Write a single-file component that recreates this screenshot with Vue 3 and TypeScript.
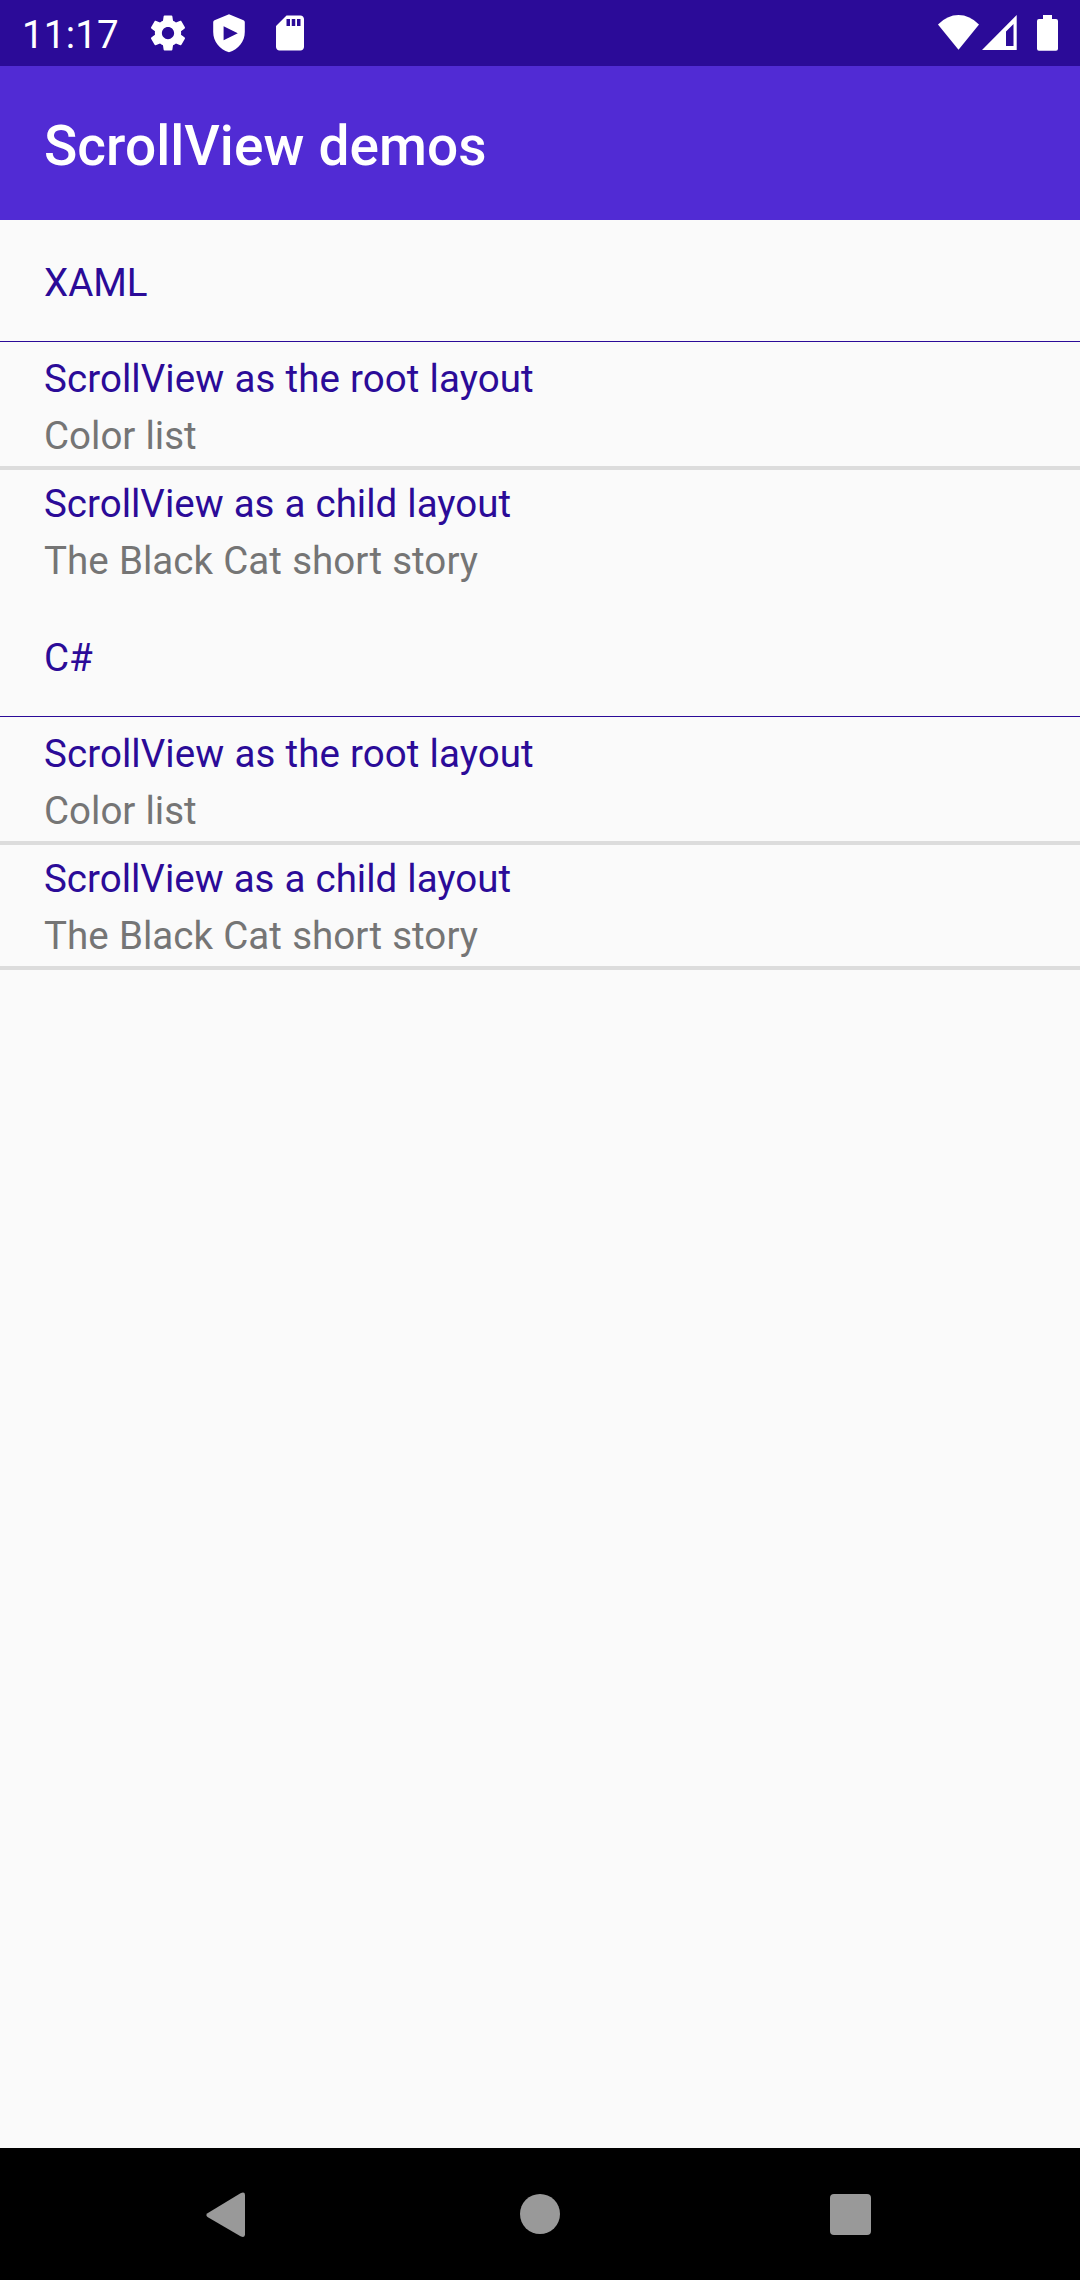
<script setup lang="ts">
interface Item {
  title: string
  titleTracking: number
  detail: string
  detailTracking: number
}
interface Section {
  name: string
  items: Item[]
}

const demos: Item[] = [
  {
    title: 'ScrollView as the root layout',
    titleTracking: 0.07,
    detail: 'Color list',
    detailTracking: 0,
  },
  {
    title: 'ScrollView as a child layout',
    titleTracking: 0,
    detail: 'The Black Cat short story',
    detailTracking: 0.06,
  },
]
const sections: Section[] = [
  { name: 'XAML', items: demos },
  { name: 'C#', items: demos },
]
</script>

<template>
  <div class="screen">
    <header class="status">
      <span class="time">11:17</span>
      <div class="notifications">
        <svg width="42" height="42" viewBox="0 0 24 24">
          <path d="M19.43 12.98c.04-.32.07-.64.07-.98s-.03-.66-.07-.98l2.11-1.65c.19-.15.24-.42.12-.64l-2-3.46c-.12-.22-.39-.3-.61-.22l-2.49 1c-.52-.4-1.08-.73-1.69-.98l-.38-2.65C14.46 2.18 14.25 2 14 2h-4c-.25 0-.46.18-.49.42l-.38 2.65c-.61.25-1.17.59-1.69.98l-2.49-1c-.23-.09-.49 0-.61.22l-2 3.46c-.13.22-.07.49.12.64l2.11 1.65c-.04.32-.07.65-.07.98s.03.66.07.98l-2.11 1.65c-.19.15-.24.42-.12.64l2 3.46c.12.22.39.3.61.22l2.49-1c.52.4 1.08.73 1.69.98l.38 2.65c.03.24.24.42.49.42h4c.25 0 .46-.18.49-.42l.38-2.65c.61-.25 1.17-.59 1.69-.98l2.49 1c.23.09.49 0 .61-.22l2-3.46c.12-.22.07-.49-.12-.64l-2.11-1.65zM12 15.5c-1.93 0-3.5-1.57-3.5-3.5s1.57-3.500 3.500-3.500 3.500 1.570 3.500 3.500-1.570 3.500-3.500 3.500z" />
        </svg>
        <svg width="42" height="42" viewBox="0 0 42 42">
          <path fill-rule="evenodd" d="M21 2.300 35.500 8.200Q36.800 8.800 36.800 10.200V20C36.800 29.500 30.500 37.300 21 40.300C11.500 37.300 5.200 29.500 5.200 20V10.200Q5.200 8.800 6.500 8.200ZM15.600 14.300V28.300L29.800 21.300Z" />
        </svg>
        <svg width="42" height="42" viewBox="0 0 24 24">
          <path d="M18 2h-8L4.020 8 4 20c0 1.100.9 2 2 2h12c1.100 0 2-.9 2-2V4c0-1.100-.9-2-2-2zm-6 6h-2V4h2v4zm3 0h-2V4h2v4zm3 0h-2V4h2v4z" />
        </svg>
      </div>
      <div class="system">
        <svg class="wifi" width="41" height="36" viewBox="0 0 41 36">
          <path d="M20.500 34.700 0 9.500Q9.200 0 20.500 0T41 9.500Z" />
        </svg>
        <svg class="signal" width="35" height="36" viewBox="0 0 35 36">
          <path fill-rule="evenodd" d="M34.700 0V35H0ZM31.500 9 24 16.500V31H31.500Z" />
        </svg>
        <svg class="battery" width="21" height="36" viewBox="0 0 21 36">
          <path d="M6 0H15V4H19Q21 4 21 6V33.700Q21 35.700 19 35.700H2Q0 35.700 0 33.700V6Q0 4 2 4H6Z" />
        </svg>
      </div>
    </header>

    <h1 class="toolbar">ScrollView demos</h1>

    <main class="content">
      <section v-for="section in sections" :key="section.name" class="section">
        <h2 class="section-name">{{ section.name }}</h2>
        <div v-for="item in section.items" :key="item.title" class="row">
          <div class="row-title" :style="{ letterSpacing: item.titleTracking + 'px' }">{{ item.title }}</div>
          <div class="row-detail" :style="{ letterSpacing: item.detailTracking + 'px' }">{{ item.detail }}</div>
        </div>
      </section>
    </main>

    <nav class="navbar">
      <svg class="back" width="40" height="46" viewBox="0 0 40 46">
        <path d="M1.500 21.200 34.500 1.200Q39 -.8 39 3V42.500Q39 46.300 34.500 44.300L1.500 24.900Q-.8 23 1.500 21.200Z" />
      </svg>
      <span class="home"></span>
      <span class="recents"></span>
    </nav>
  </div>
</template>

<style>
body {
  margin: 0;
}
</style>

<style scoped>
.screen {
  display: flex;
  flex-direction: column;
  width: 1080px;
  height: 2280px;
  overflow: hidden;
  background: #fafafa;
  font-family: Roboto, sans-serif;
  font-size: 38.5px;
  font-weight: 400;
  word-spacing: 0.5px;
}
.status {
  display: flex;
  box-sizing: border-box;
  flex: none;
  height: 66px;
  padding-left: 22px;
  padding-right: 22px;
  background: #2b0b98;
  color: #fff;
}
.status svg {
  display: block;
  fill: #fff;
}
.time {
  width: 125.4px;
  padding-top: 3px;
  letter-spacing: 0.2px;
  line-height: 63px;
}
.notifications {
  display: flex;
  gap: 19px;
  padding-top: 12px;
}
.system {
  display: flex;
  margin-left: auto;
  padding-top: 15px;
}
.signal {
  margin-left: 3px;
}
.battery {
  margin-left: 20px;
}
.toolbar {
  box-sizing: border-box;
  flex: none;
  height: 154px;
  margin: 0;
  padding: 6px 44px 0;
  background: #512bd4;
  color: #fff;
  font-size: 55px;
  font-weight: 500;
  letter-spacing: 0.05px;
  line-height: 148px;
}
.content {
  flex: 1;
}
.section-name {
  box-sizing: border-box;
  height: 122px;
  margin: 0 0 3px;
  padding: 5px 44px 0;
  border-bottom: 1px solid #2b0b98;
  color: #2b0b98;
  font-size: 38.5px;
  font-weight: 400;
  line-height: 116px;
}
.row {
  box-sizing: border-box;
  height: 125px;
  padding: 5px 44px 0;
  border-bottom: 4px solid #dcdcdc;
  line-height: 57px;
}
.section:not(:last-child) .row:last-child {
  border-bottom-color: transparent;
}
.row-title {
  color: #2b0b98;
}
.row-detail {
  color: #757575;
}
.navbar {
  display: flex;
  flex: none;
  align-items: flex-start;
  box-sizing: border-box;
  height: 132px;
  padding: 44px 0 0 206px;
  background: #000;
}
.back {
  fill: #999;
}
.home {
  width: 40px;
  height: 40px;
  margin: 2px 270px 0 274px;
  border-radius: 50%;
  background: #999;
}
.recents {
  width: 41px;
  height: 41px;
  margin-top: 2px;
  border-radius: 4px;
  background: #999;
}
</style>
